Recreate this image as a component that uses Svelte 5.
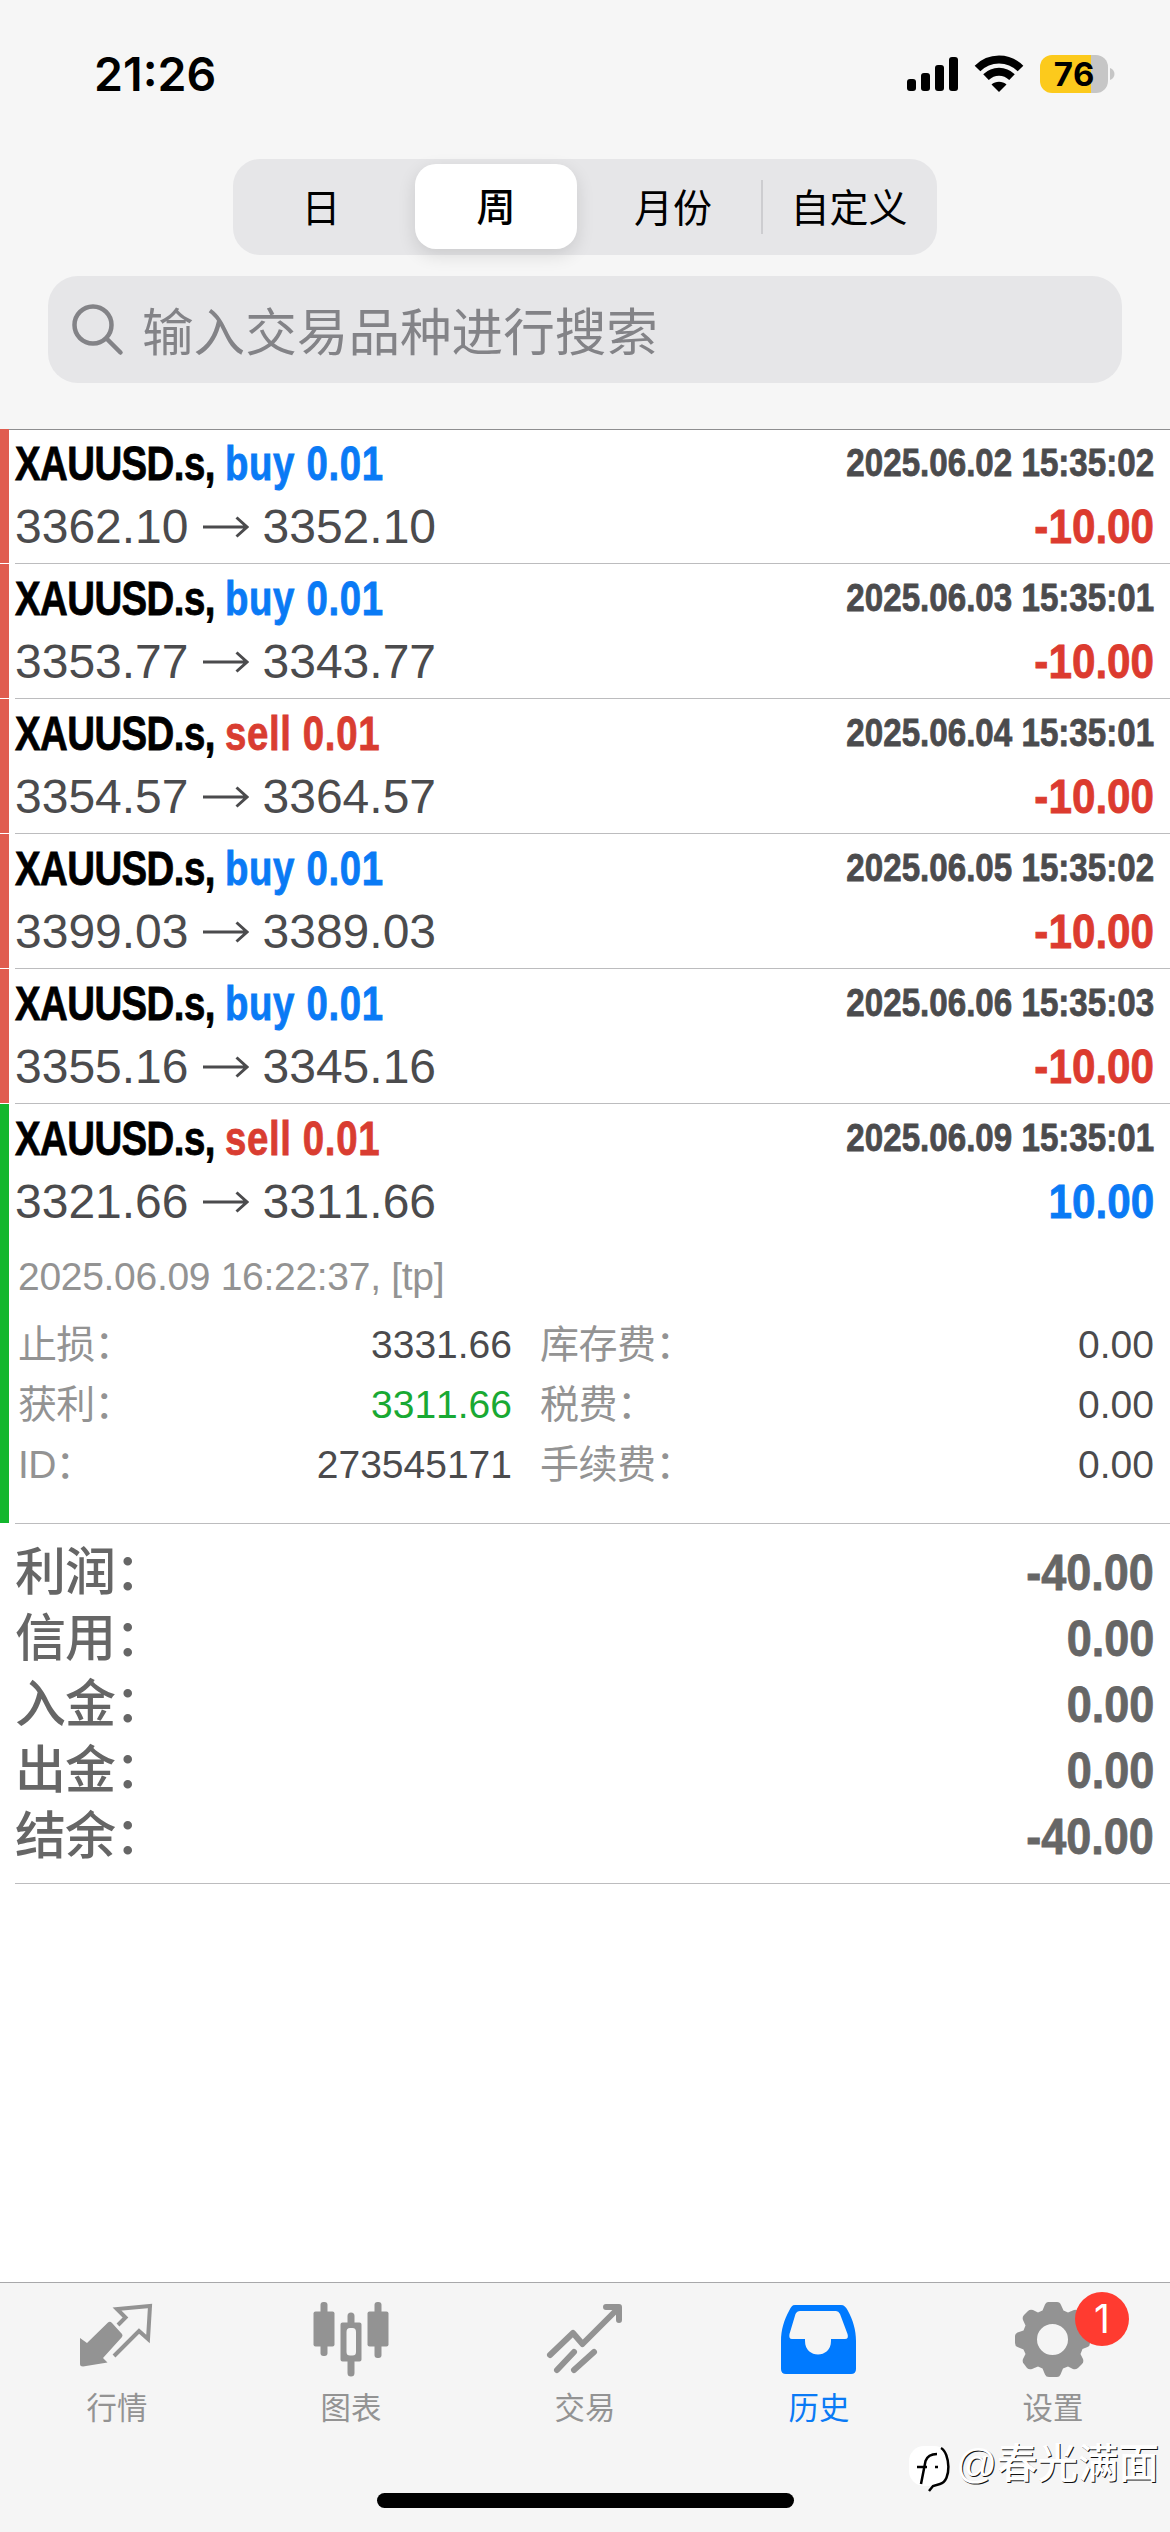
<script>
    let periods = ['日', '周', '月份', '自定义']
    let period = '周'
    let search = ''
    let opened = 5

    let deals = [
        { symbol: 'XAUUSD.s', side: 'buy', volume: '0.01', open: '3362.10', close: '3352.10', time: '2025.06.02 15:35:02', profit: '-10.00' },
        { symbol: 'XAUUSD.s', side: 'buy', volume: '0.01', open: '3353.77', close: '3343.77', time: '2025.06.03 15:35:01', profit: '-10.00' },
        { symbol: 'XAUUSD.s', side: 'sell', volume: '0.01', open: '3354.57', close: '3364.57', time: '2025.06.04 15:35:01', profit: '-10.00' },
        { symbol: 'XAUUSD.s', side: 'buy', volume: '0.01', open: '3399.03', close: '3389.03', time: '2025.06.05 15:35:02', profit: '-10.00' },
        { symbol: 'XAUUSD.s', side: 'buy', volume: '0.01', open: '3355.16', close: '3345.16', time: '2025.06.06 15:35:03', profit: '-10.00' },
        { symbol: 'XAUUSD.s', side: 'sell', volume: '0.01', open: '3321.66', close: '3311.66', time: '2025.06.09 15:35:01', profit: '10.00' }
    ]

    let details = [
        { label: '止损：', value: '3331.66', label2: '库存费：', value2: '0.00' },
        { label: '获利：', value: '3311.66', hit: true, label2: '税费：', value2: '0.00' },
        { label: 'ID：', value: '273545171', label2: '手续费：', value2: '0.00' }
    ]

    let totals = [
        ['利润：', '-40.00'],
        ['信用：', '0.00'],
        ['入金：', '0.00'],
        ['出金：', '0.00'],
        ['结余：', '-40.00']
    ]

    let tab = '历史'
    let tabs = ['行情', '图表', '交易', '历史', '设置']
</script>

<div class="screen">
    <header>
        <div class="status">
            <span class="clock">21:26</span>
            <div class="status-icons">
                <svg width="51" height="36" viewBox="0 0 51 36">
                    <rect x="0" y="24" width="9" height="12" rx="3" />
                    <rect x="14" y="18" width="9" height="18" rx="3" />
                    <rect x="28" y="10" width="9" height="26" rx="3" />
                    <rect x="42" y="2" width="9" height="34" rx="3" />
                </svg>
                <svg class="wifi" width="50" height="38" viewBox="0 0 50 38">
                    <path class="arc" d="M3.5 13.5C15.5 1.5 34.5 1.5 46.5 13.5" />
                    <path class="arc" d="M12 22.2C19.5 15 30.5 15 38 22.2" />
                    <path d="M17.5 29.5C21.5 25.8 28.5 25.8 32.5 29.5L25 37Z" />
                </svg>
                <div class="battery"><span>76</span></div>
                <svg class="nub" width="5" height="12" viewBox="0 0 5 12"><path d="M0 0C6 2 6 10 0 12Z" /></svg>
            </div>
        </div>
        <div class="periods">
            {#each periods as p, i}
                <button class:active={p === period} class:divided={i === 3} on:click={() => period = p}>{p}</button>
            {/each}
        </div>
        <label class="search">
            <svg width="52" height="52" viewBox="0 0 52 52">
                <circle cx="21" cy="21" r="18.5" />
                <path d="M34.5 34.5L48.5 48.5" />
            </svg>
            <input placeholder="输入交易品种进行搜索" bind:value={search}>
        </label>
    </header>

    <main>
        {#each deals as d, i}
            <section class="deal" class:win={!d.profit.startsWith('-')}>
                <div class="line">
                    <span class="title">{d.symbol}, <b class={d.side}>{d.side} {d.volume}</b></span>
                    <span class="time">{d.time}</span>
                </div>
                <div class="line second">
                    <span class="prices">
                        {d.open}
                        <svg width="46" height="22" viewBox="0 0 46 22"><path d="M0 11H44M33.5 1.5L44 11L33.5 20.5" /></svg>
                        {d.close}
                    </span>
                    <span class="profit">{d.profit}</span>
                </div>
                {#if i === opened}
                    <div class="details">
                        <p>2025.06.09 16:22:37, [tp]</p>
                        {#each details as row}
                            <div class="detail">
                                <span class="label">{row.label}</span>
                                <span class="value" class:hit={row.hit}>{row.value}</span>
                                <span class="label2">{row.label2}</span>
                                <span class="value">{row.value2}</span>
                            </div>
                        {/each}
                    </div>
                {/if}
            </section>
        {/each}
        <div class="totals">
            {#each totals as [name, sum]}
                <div class="total"><span class="name">{name}</span><span class="sum">{sum}</span></div>
            {/each}
        </div>
    </main>

    <nav>
        {#each tabs as t, i}
            <button class:current={t === tab} on:click={() => tab = t}>
                <svg width="78" height="78" viewBox="0 0 78 78">
                    {#if i === 0}
                        <path d="M2 34L9 39L30 18.5Q32 17 34 19L44 30Q45 31.5 44 33L25 54L29.5 58.5L5 62.5Q2 62.5 2 60Z" />
                        <path class="line4" d="M40 21L47.5 13.5L39 5L72 2L70 35L61 27L36 52" />
                    {:else if i === 1}
                        <rect x="1.5" y="7.5" width="21" height="35" rx="2" />
                        <rect x="8.5" y="-2" width="7" height="54" rx="3" />
                        <rect x="55.5" y="7.5" width="21" height="35" rx="2" />
                        <rect x="62.5" y="-2" width="7" height="56" rx="3" />
                        <path fill-rule="evenodd" d="M30.5 18.5H47.5Q49.5 18.5 49.5 20.5V55.5Q49.5 57.5 47.5 57.5H30.5Q28.5 57.5 28.5 55.5V20.5Q28.5 18.5 30.5 18.5ZM38 24Q34.5 24 34.5 28V48Q34.5 51.5 38 51.5H40.5Q44 51.5 44 48V28Q44 24 40.5 24Z" />
                        <path class="wick" d="M39 12V19M39 57V69" />
                    {:else if i === 2}
                        <path class="trend" d="M4 51L27 29L36.5 40L71 5.5M60 3H73V16" />
                        <path class="trend" d="M28 48L11 66M48 48L28 66" />
                    {:else if i === 3}
                        <path fill-rule="evenodd" d="M15 1H61C64 1 66 3 67.5 6C73 16 76 26 76 37V65Q76 70 71 70H6Q1 70 1 65V37C1 26 4 16 9.5 6C11 3 12 1 15 1ZM20 7Q17 7 15.5 10L9.5 30Q8.5 35 12 35H25V37C25 55 51 55 51 37V35H65Q69 35 67.5 30L60 10Q58.5 7 56 7Z" />
                    {:else}
                        <path fill-rule="evenodd" transform="translate(0 -4)" d="M34 2H43Q46 2 47 5L49.5 10.5L54 12.5L60 10Q63 9 65 11L68 15Q70 17 69 20L66.5 25.5L68.5 30.5L74 32.5Q76 33.5 76 36V43Q76 46 73.5 47L68.5 49L66.5 54L69 59Q70 62 68 64L64 68Q61.5 70 59 69L54 66.5L49 68.5L46.5 74.5Q45.5 77 43 77H35Q32 77 31 74.5L28.5 68.5L24 66.5L18 69Q15 70 13 68L10 64Q8 62 9 59L11.5 54L9.5 49.5L3.5 47Q1 46 1 43V36Q1 33.5 3.5 32.5L9.5 30.5L11.5 25.5L9 20Q8 17 10 15L14 11Q16 9 19 10L24 12.5L28.5 10.5L31 4.5Q32 2 34 2ZM38.5 24A15.5 15.5 0 1 0 38.5 55A15.5 15.5 0 1 0 38.5 24Z" />
                    {/if}
                </svg>
                <span>{t}</span>
                {#if i === 4}<em>1</em>{/if}
            </button>
        {/each}
    </nav>
    <footer>
        <div class="watermark">
            <svg width="48" height="50" viewBox="0 0 48 50">
                <rect x="1" y="3" width="40" height="40" rx="15" fill="#fff" />
                <path d="M33 5C42 10 44 38 32 41L25 43L21 48M9 24H19M13 41L17.5 18Q20 11 29 11M27 24H30" />
            </svg>
            <span>@春光满面</span>
        </div>
        <div class="home"></div>
    </footer>
</div>

<style>
    :global(body) {
        margin: 0;
        background: #fff;
    }
    .screen {
        width: 1170px;
        height: 2532px;
        display: flex;
        flex-direction: column;
        overflow: hidden;
        font-family: "Liberation Sans", "Noto Sans CJK SC", sans-serif;
        font-kerning: none;
        background: #fff;
    }
    button {
        border: 0;
        padding: 0;
        background: none;
        font-family: inherit;
    }
    header {
        height: 429px;
        flex: none;
        background: #f6f6f6;
        border-bottom: 1px solid #8e8e90;
        display: flex;
        flex-direction: column;
        align-items: center;
    }
    .status {
        width: 100%;
        height: 159px;
        box-sizing: border-box;
        padding: 55px 55px 0 94px;
        display: flex;
        justify-content: space-between;
        align-items: flex-start;
        font-family: Inter, sans-serif;
    }
    .clock {
        font-size: 46.5px;
        line-height: 39px;
        font-weight: 600;
    }
    .status-icons {
        display: flex;
        height: 38px;
        align-items: flex-start;
    }
    .wifi {
        margin: 0 16px 0 16px;
    }
    .arc {
        fill: none;
        stroke: #000;
        stroke-width: 8;
    }
    .battery {
        width: 68px;
        height: 38px;
        border-radius: 12px;
        background: linear-gradient(to right, #fcca1c 51px, #c6c6c6 51px);
        text-align: center;
        font-size: 33px;
        font-weight: 700;
        line-height: 38px;
    }
    .nub {
        margin: 13px 0 0 2px;
        fill: #c6c6c6;
    }
    .periods {
        width: 704px;
        height: 96px;
        border-radius: 27px;
        background: #e6e6e8;
        display: grid;
        grid-template-columns: repeat(4, 1fr);
    }
    .periods button {
        font-size: 39px;
        color: #000;
        position: relative;
        padding-bottom: 5px;
    }
    .periods .active {
        margin: 5px 8px 6px 6px;
        background: #fff;
        border-radius: 21px;
        font-weight: 500;
        box-shadow: 0 6px 18px rgba(0, 0, 0, 0.12);
    }
    .periods .divided::before {
        content: "";
        position: absolute;
        left: 0;
        top: 21px;
        width: 2px;
        height: 54px;
        background: #cdcdd0;
    }
    .search {
        width: 1074px;
        height: 107px;
        margin-top: 21px;
        border-radius: 30px;
        background: #e6e6e8;
        display: flex;
        align-items: center;
        box-sizing: border-box;
        padding-left: 24px;
    }
    .search svg {
        fill: none;
        stroke: #838387;
        stroke-width: 4.5;
        stroke-linecap: round;
    }
    .search input {
        flex: 1;
        margin-left: 18px;
        padding: 0 0 3px;
        border: 0;
        outline: 0;
        background: none;
        font: 51.6px "Noto Sans CJK SC", sans-serif;
    }
    .search input::placeholder {
        color: #838387;
        opacity: 1;
    }
    main {
        flex: 1;
        margin-top: -1px;
    }
    .deal {
        box-sizing: border-box;
        height: 135px;
        padding: 0 16px 0 15px;
        background:
            linear-gradient(#e05d50, #e05d50) no-repeat left top / 9px calc(100% - 1px),
            linear-gradient(#bcbcbe, #bcbcbe) no-repeat 15px 100% / 100% 1px;
    }
    .deal.win {
        height: 420px;
        background:
            linear-gradient(#13b72e, #13b72e) no-repeat left top / 9px calc(100% - 1px),
            linear-gradient(#bcbcbe, #bcbcbe) no-repeat 15px 100% / 100% 1px;
    }
    .line {
        display: flex;
        justify-content: space-between;
        height: 68px;
        line-height: 69px;
        white-space: nowrap;
    }
    .second {
        height: 62px;
        line-height: 60px;
    }
    /* condensed bold figures */
    .title, .time, .profit, .sum {
        font-weight: 700;
        font-size: 48px;
        transform-origin: right;
        -webkit-text-stroke: 0.8px currentColor;
    }
    .title {
        letter-spacing: -0.7px;
        transform: scaleX(0.8);
        transform-origin: left;
    }
    .title b {
        letter-spacing: 0.8px;
    }
    .buy {
        color: #0a7af5;
    }
    .sell {
        color: #d93d31;
    }
    .time {
        font-size: 39px;
        line-height: 67px;
        color: #4b4b4d;
        transform: scaleX(0.85);
    }
    .prices {
        display: flex;
        align-items: center;
        height: 59px;
        font-size: 48px;
        color: #4b4b4d;
    }
    .prices svg {
        margin: 0 14px;
        fill: none;
        stroke: #4b4b4d;
        stroke-width: 3;
    }
    .profit {
        color: #dc3b2f;
        transform: scaleX(0.88);
    }
    .win .profit {
        color: #0a7af5;
    }
    .details {
        padding-left: 3px;
        font-size: 39px;
        color: #939393;
    }
    .details p {
        margin: 13px 0 8px;
        line-height: 60px;
        letter-spacing: -0.3px;
    }
    .detail {
        display: flex;
        height: 60px;
        line-height: 59px;
    }
    .label {
        width: 195px;
        letter-spacing: -0.7px;
    }
    .value {
        flex: 1;
        text-align: right;
        color: #4b4b4d;
    }
    .label2 {
        width: 315px;
        padding-left: 28px;
        letter-spacing: -0.5px;
    }
    .hit {
        color: #19a933;
    }
    .totals {
        margin-left: 15px;
        padding: 16px 16px 13px 0;
        border-bottom: 1px solid #bcbcbe;
        color: #666;
    }
    .total {
        display: flex;
        justify-content: space-between;
        height: 66px;
        line-height: 66px;
        font-size: 51px;
        font-weight: 500;
    }
    .name {
        letter-spacing: -1px;
    }
    .sum {
        font-size: 50px;
        transform: scaleX(0.9);
    }
    nav {
        display: grid;
        grid-template-columns: repeat(5, 1fr);
        height: 159px;
        flex: none;
        background: #f5f5f5;
        border-top: 1px solid #a8a8aa;
    }
    nav button {
        position: relative;
        display: flex;
        flex-direction: column;
        align-items: center;
        padding-top: 21px;
        color: #939393;
        fill: #939393;
    }
    nav svg {
        overflow: visible;
    }
    nav span {
        font-size: 30.4px;
        line-height: 40px;
        margin-top: 6px;
    }
    .current {
        color: #0a7af5;
        fill: #007aff;
    }
    .line4, .wick, .trend {
        fill: none;
        stroke: #939393;
        stroke-width: 4;
    }
    .wick {
        stroke-width: 7;
        stroke-linecap: round;
    }
    .trend {
        stroke-width: 6;
        stroke-linecap: round;
        stroke-linejoin: round;
    }
    nav em {
        position: absolute;
        left: 139px;
        top: 9px;
        width: 54px;
        height: 54px;
        border-radius: 50%;
        background: #ff3b30;
        color: #fff;
        font: 39px/54px Inter, sans-serif;
        text-align: center;
    }
    footer {
        height: 90px;
        flex: none;
        background: #f5f5f5;
        display: flex;
        flex-direction: column;
    }
    .watermark {
        display: flex;
        align-self: flex-end;
        height: 50px;
        padding: 1px 11px 0 0;
        color: #fff;
        font-size: 40.5px;
        font-weight: 500;
        line-height: 42px;
        text-shadow: 1px 1px 0 #111;
    }
    .watermark path {
        fill: none;
        stroke: #000;
        stroke-width: 2.5;
    }
    .home {
        align-self: center;
        width: 417px;
        height: 15px;
        border-radius: 8px;
        background: #000;
    }
</style>
